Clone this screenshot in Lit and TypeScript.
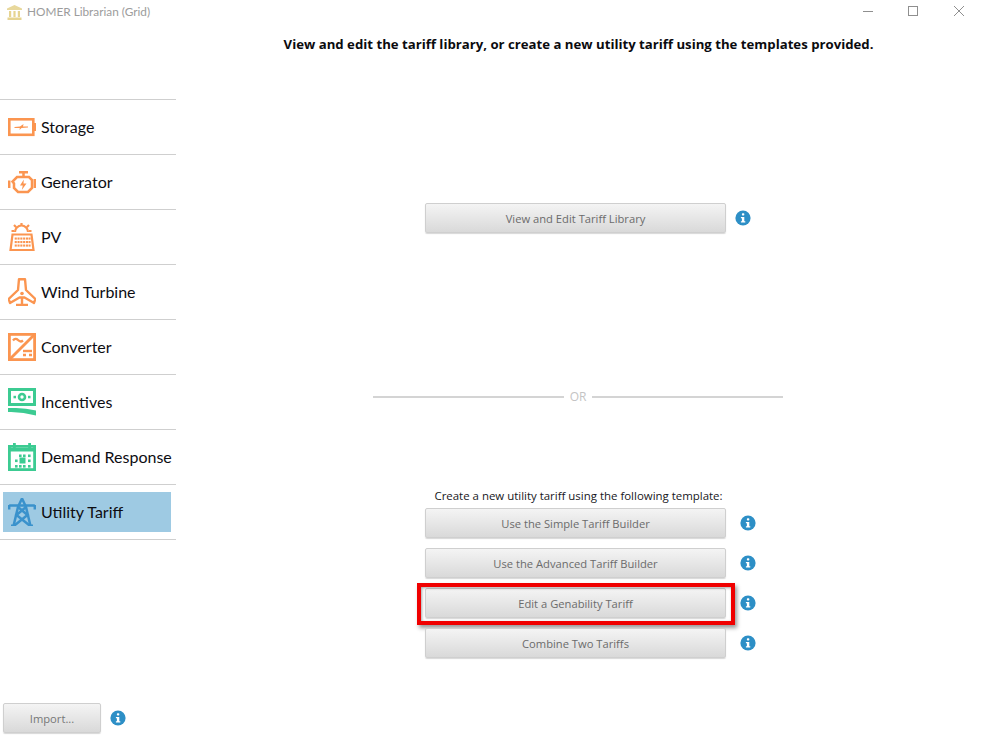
import { LitElement, html, css, svg } from "lit";
import { customElement } from "lit/decorators.js";

const dotsGrid = (xs: number[], ys: number[], s: number, fill: string) =>
  ys.flatMap((y) => xs.map((x) => svg`<rect x=${x} y=${y} width=${s} height=${s} fill=${fill}></rect>`));

const O = "#fb9550";
const G = "#3ccb92";
const B = "#3a92cc";

const icons: Record<string, unknown> = {
  storage: svg`<rect x="1.3" y="6.3" width="24" height="15.5" fill="none" stroke=${O} stroke-width="2.6"></rect>
    <rect x="26" y="10" width="2.2" height="8" fill=${O}></rect>
    <path d="M6.5 14 L12 13.6 L15.5 11 L15 13.6 L20 13.6 L20 14.6 L13.5 15 L11.5 17 L11.8 15 L6.5 15 Z" fill=${O}></path>`,
  generator: svg`<g fill="none" stroke=${O} stroke-width="2.5">
      <path d="M11 4.2 H20 M15.5 4.2 V9"></path>
      <path d="M9 9 H21 L24 12 V20 L20 24 H10 L6 20 V15.5 L4.5 13.5 L9 9 Z"></path>
      <path d="M1.2 12.5 V20 M26.8 11 V20"></path>
    </g>
    <path d="M15.8 11.5 L12 17.5 H14.8 L13.8 22 L18.5 15.5 H15.5 Z" fill=${O}></path>`,
  pv: svg`<g fill="none" stroke=${O} stroke-width="2.2">
      <path d="M7 9 A6.5 6.5 0 0 1 20 9"></path>
      <path d="M13.5 0 V3 M6 2 L8.2 4.2 M21 2 L18.8 4.2 M3.5 8 H6 M21 8 H23.5"></path>
      <path d="M4.5 11.5 H23.5 L25.5 27 H2.5 Z"></path>
    </g>
    ${dotsGrid([6.7, 9.5, 12.3, 15.1, 17.9, 20.5], [14.5, 18, 21.5], 2.1, O)}`,
  wind: svg`<path d="M11 1.2 H17 L18 12 L27.3 21 L26 25 L16.5 19.5 H11.5 L2 25 L0.7 21 L10 12 Z" fill="none" stroke=${O} stroke-width="2.4" stroke-linejoin="round"></path>
    <circle cx="14" cy="15.5" r="1.8" fill=${O}></circle>
    <path d="M14 19 V27 M8 27 H20" fill="none" stroke=${O} stroke-width="2.4"></path>`,
  converter: svg`<rect x="1.4" y="1.4" width="25.2" height="25.2" fill="none" stroke=${O} stroke-width="2.8"></rect>
    <path d="M1.5 26.5 L26.5 1.5" stroke=${O} stroke-width="2.8"></path>
    <path d="M5 7.5 Q7.5 4.5 10 7 T15 7.5" fill="none" stroke=${O} stroke-width="2.4"></path>
    <path d="M15 18 H24" stroke=${O} stroke-width="2.4"></path>
    <path d="M15 22 H18 M21 22 H24" stroke=${O} stroke-width="2.4"></path>`,
  incentives: svg`<rect x="1.5" y="1.5" width="25" height="15" fill="none" stroke=${G} stroke-width="3"></rect>
    <circle cx="14" cy="9" r="3" fill="none" stroke=${G} stroke-width="2.6"></circle>
    <rect x="5.5" y="7.8" width="2.5" height="2.5" fill=${G}></rect><rect x="20" y="7.8" width="2.5" height="2.5" fill=${G}></rect>
    <path d="M0 20 H8 Q18 20 28 22.5 V27.5 Q14 23.5 0 24 Z" fill=${G}></path>`,
  demand: svg`<rect x="1.4" y="3.4" width="25.2" height="23.2" fill="none" stroke=${G} stroke-width="2.8"></rect>
    <rect x="1" y="5" width="26" height="3.5" fill=${G}></rect>
    <rect x="5" y="0" width="2.8" height="5" fill=${G}></rect><rect x="20.2" y="0" width="2.8" height="5" fill=${G}></rect>
    ${dotsGrid([11, 15, 20], [11.5, 22], 2.6, G)}
    ${dotsGrid([7, 20], [16.5], 2.6, G)}
    ${dotsGrid([7], [22], 2.6, G)}
    <rect x="11.5" y="14.5" width="6" height="6" fill=${G}></rect>`,
  utility: svg`<g fill="none" stroke=${B} stroke-width="2.5">
      <path d="M14 0.5 L10 9 L5.5 28 M14 0.5 L18 9 L22.5 28"></path>
      <path d="M1.2 7.5 H26.8 M1.2 7 V11.5 M26.8 7 V11.5 M3 27.7 H8 M20 27.7 H25"></path>
      <path d="M10 9 L19.5 17 L7 27 M18 9 L8.5 17 L21 27"></path>
    </g>`,
};

const items = [
  { key: "storage", label: "Storage" },
  { key: "generator", label: "Generator" },
  { key: "pv", label: "PV" },
  { key: "wind", label: "Wind Turbine" },
  { key: "converter", label: "Converter" },
  { key: "incentives", label: "Incentives" },
  { key: "demand", label: "Demand Response" },
  { key: "utility", label: "Utility Tariff", active: true },
];

const info = html`<svg class="info" viewBox="0 0 16 16" width="16" height="16" aria-hidden="true">
  <circle cx="8" cy="8" r="7.6" fill="#2d8fc6"></circle>
  <rect x="6.9" y="3.3" width="2.4" height="2.3" rx="0.8" fill="#fff"></rect>
  <path d="M5.9 6.9 H9.3 V11.2 H10.3 V12.6 H5.9 V11.2 H6.9 V8.3 H5.9 Z" fill="#fff"></path>
</svg>`;

@customElement("app-root")
export class AppRoot extends LitElement {
  static styles = css`
    :host {
      display: flex;
      flex-direction: column;
      width: 981px;
      height: 738px;
      background: #fff;
      overflow: hidden;
      font-family: "Open Sans", sans-serif;
    }
    .titlebar {
      flex: 0 0 30px;
      display: flex;
      align-items: flex-start;
      justify-content: space-between;
    }
    .app {
      display: flex;
      align-items: center;
      gap: 5px;
      padding: 4px 0 0 7px;
      font: 11.8px/16px Lato, sans-serif;
      color: #9c9c9c;
    }
    .win {
      padding: 6px 17px 0 0;
    }
    .win svg {
      display: block;
    }
    .body {
      flex: 1;
      display: flex;
      min-height: 0;
    }
    .side {
      flex: 0 0 176px;
      width: 176px;
      min-width: 0;
      display: flex;
      flex-direction: column;
      padding-top: 69px;
    }
    .nav {
      border-top: 1px solid #cfcfcf;
    }
    .item {
      height: 54px;
      border-bottom: 1px solid #cfcfcf;
      display: flex;
      align-items: center;
    }
    .pill {
      flex: 1;
      min-width: 0;
      height: 40px;
      margin: 0 5px 0 3px;
      padding-left: 5px;
      display: flex;
      align-items: center;
      gap: 5px;
      font: 16px/20px Lato, sans-serif;
      color: #0d0d12;
      white-space: nowrap;
    }
    .pill.active {
      background: #9ecae3;
    }
    .pill svg {
      flex: none;
      display: block;
    }
    .foot {
      margin-top: auto;
      display: flex;
      align-items: center;
      gap: 9px;
      padding: 0 0 5px 3px;
    }
    .btn {
      box-sizing: border-box;
      flex: none;
      height: 30px;
      width: 301px;
      padding-top: 1px;
      display: flex;
      align-items: center;
      justify-content: center;
      border: 1px solid #cfcfcf;
      border-radius: 2px;
      background: linear-gradient(#f4f4f4, #d9d9d9);
      box-shadow: 0 1px 1px #d8d8d8;
      color: #6b6b6b;
      font: 11.2px/16px "Open Sans", sans-serif;
    }
    .btn.small {
      width: 98px;
      color: #777;
    }
    .info {
      flex: none;
      display: block;
    }
    .main {
      flex: 1;
      display: flex;
      flex-direction: column;
      min-width: 0;
    }
    h1 {
      margin: 0;
      height: 30px;
      font: 700 13.2px/28px "Open Sans", sans-serif;
      text-align: center;
      color: #0b0b0f;
    }
    .row {
      position: relative;
      display: flex;
      align-items: center;
      gap: 14px;
      margin-left: 249px;
    }
    .row.first {
      gap: 9px;
      margin-top: 143px;
    }
    .row + .row {
      margin-top: 10px;
    }
    .or {
      display: flex;
      align-items: center;
      gap: 6px;
      margin: 154px 0 0 197px;
      width: 410px;
      height: 20px;
      font: 12px/20px "Open Sans", sans-serif;
      color: #c4c4c4;
    }
    .or i {
      flex: 1;
      height: 2px;
      background: #d4d4d4;
    }
    .lead {
      margin: 81px 0 4px;
      height: 16px;
      font: 11.45px/16px "Open Sans", sans-serif;
      text-align: center;
      color: #17171c;
    }
    .mark {
      position: absolute;
      left: -8px;
      top: -5px;
      width: 318px;
      height: 42px;
      box-sizing: border-box;
      border: 4px solid #f00000;
      box-shadow: 2px 3px 4px rgba(0, 0, 0, 0.4), inset 1px 1px 3px rgba(0, 0, 0, 0.35);
      pointer-events: none;
    }
  `;

  render() {
    return html`
      <div class="titlebar">
        <div class="app">
          <svg width="15" height="15" viewBox="0 0 15 15" aria-hidden="true">
            <path d="M7.5 0 L15 3.5 V5 H0 V3.5 Z" fill="#e8d89c"></path>
            <path d="M2 6 H4.2 V12 H2 Z M6.4 6 H8.6 V12 H6.4 Z M10.8 6 H13 V12 H10.8 Z" fill="#e6d491"></path>
            <rect x="0.5" y="12.5" width="14" height="2.5" fill="#e6d491"></rect>
          </svg>
          HOMER Librarian (Grid)
        </div>
        <div class="win">
          <svg width="101" height="12" viewBox="0 0 101 12" aria-hidden="true">
            <path d="M0 5.5 H10" stroke="#8f8f8f" stroke-width="1"></path>
            <rect x="45.5" y="0.5" width="9" height="9" fill="none" stroke="#8f8f8f"></rect>
            <path d="M91 0 L101 10 M101 0 L91 10" stroke="#8f8f8f" stroke-width="1"></path>
          </svg>
        </div>
      </div>
      <div class="body">
        <div class="side">
          <div class="nav">
            ${items.map(
              (it) => html`<div class="item">
                <div class="pill ${it.active ? "active" : ""}">
                  <svg width="28" height="28" viewBox="0 0 28 28" aria-hidden="true">${icons[it.key]}</svg>
                  <span>${it.label}</span>
                </div>
              </div>`
            )}
          </div>
          <div class="foot"><div class="btn small">Import...</div>${info}</div>
        </div>
        <div class="main">
          <h1>View and edit the tariff library, or create a new utility tariff using the templates provided.</h1>
          <div class="row first"><div class="btn">View and Edit Tariff Library</div>${info}</div>
          <div class="or"><i></i><span>OR</span><i></i></div>
          <div class="lead">Create a new utility tariff using the following template:</div>
          <div class="row"><div class="btn">Use the Simple Tariff Builder</div>${info}</div>
          <div class="row"><div class="btn">Use the Advanced Tariff Builder</div>${info}</div>
          <div class="row"><div class="btn">Edit a Genability Tariff</div>${info}<div class="mark"></div></div>
          <div class="row"><div class="btn">Combine Two Tariffs</div>${info}</div>
        </div>
      </div>
    `;
  }
}
